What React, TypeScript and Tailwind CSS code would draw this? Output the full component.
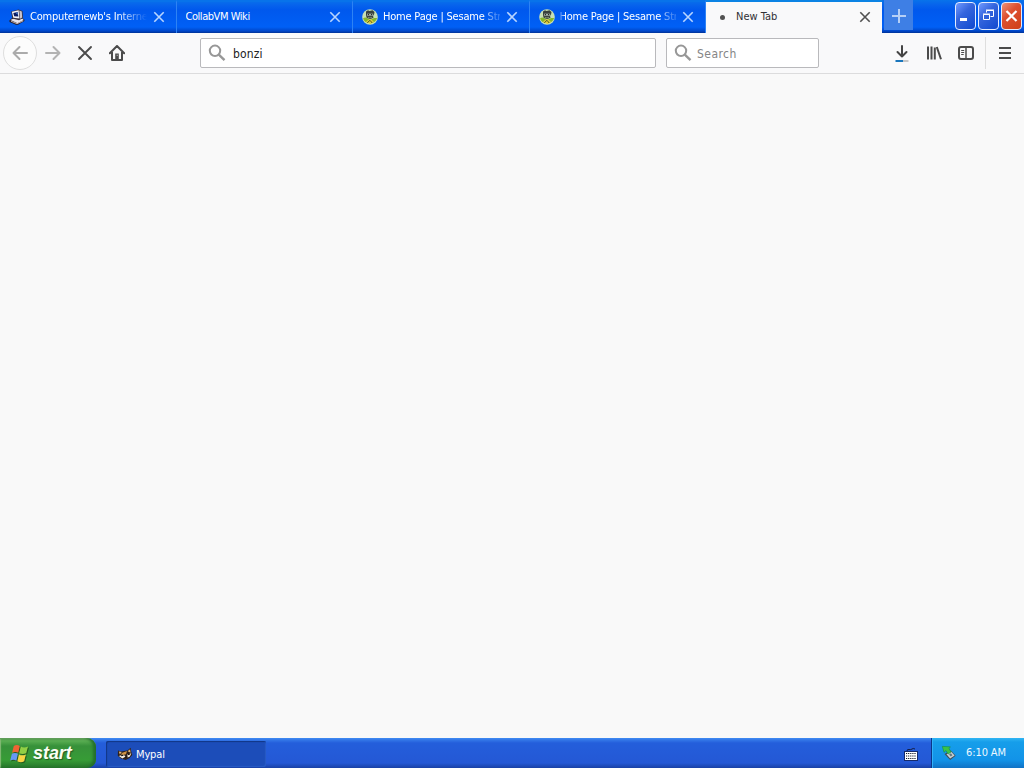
import type { ReactNode } from "react";
import clsx from "clsx";

type TabProps = {
  title: string;
  icon?: ReactNode;
  active?: boolean;
  fade?: string;
  titleClass?: string;
};

function CloseIcon({ className }: { className?: string }) {
  return (
    <svg viewBox="0 0 12 12" className={clsx("size-3 shrink-0", className)} fill="none" stroke="currentColor">
      <path d="M1.3 1.3l9.4 9.4M10.7 1.3l-9.4 9.4" strokeWidth="1.6" />
    </svg>
  );
}

function SearchIcon() {
  return (
    <svg viewBox="0 0 18 18" className="size-[18px] shrink-0" fill="none" stroke="#979797">
      <circle cx="7" cy="6.8" r="5.2" strokeWidth="2" />
      <path d="M10.8 10.6l5.7 5.6" strokeWidth="2.4" />
    </svg>
  );
}

function ComputerIcon() {
  return (
    <svg viewBox="0 0 16 16" className="size-4 shrink-0">
      <path d="M.5 11.3l3-2.6 9.5.3 2.4 1.6v1.4L9 15.8H7L.5 13z" fill="#251c26" />
      <path d="M1.5 11l3-1.6 8.8.1 1.4 1.5-6.2 3.2z" fill="#e6e3ec" />
      <path d="M2 12.2l6 2.5 6.2-2.8" stroke="#c9b9b8" strokeWidth=".9" fill="none" />
      <path d="M2.2 2.5L9.5.4l4 1.5.5 7-4 2.3-6.7-1.7z" fill="#39323f" />
      <path d="M2.9 2.7l6.7-1.5.9 8.4-6.2-.9z" fill="#f3f4fa" />
      <path d="M4.3 3.9l4.4-.9.6 4.6-4.1-.3z" fill="#0a1c62" />
      <path d="M6.6 3.8l1.8-.4.3 2.3z" fill="#4b8ee8" />
      <path d="M10.3 1.4l2.5 1 .4 6-2.1 1.4z" fill="#c9c3cb" />
    </svg>
  );
}

function SesameIcon() {
  return (
    <svg viewBox="0 0 16 16" className="size-4 shrink-0">
      <circle cx="8" cy="8" r="7.8" fill="#c7e0b4" />
      <path d="M1 9.5Q3 8 5 9l3 2 4-2 3.2 0a7.6 7.6 0 0 1-14.2.5z" fill="#86b52a" />
      <path d="M4 2.5l2-1.2 1.5.8 3-.8 2 1.6-.5 2.8-1 1 .5 2-3.4 1.5-3.5-1.4L4 6z" fill="#39413c" />
      <path d="M5 4.7h6.2v2H5z" fill="#a9b6ae" />
      <circle cx="6.4" cy="5.6" r=".7" fill="#151b16" />
      <circle cx="9.6" cy="5.6" r=".7" fill="#151b16" />
      <path d="M5.8 8.2q2.1 1.5 4.3 0" stroke="#7c9173" fill="none" />
      <path d="M4 12.5l3.5-2.2 2 .3 2.5 2.5-3.6 2z" fill="#e3cc3a" />
      <path d="M5.3 13.7l2.7-2.4 2.2 2.7" stroke="#4d5b22" fill="none" />
    </svg>
  );
}

function RaccoonIcon() {
  return (
    <svg viewBox="0 0 16 16" className="size-4 shrink-0">
      <path d="M1 4.6l3 1 3-.6 3.5-.4L13.6 1.8l.7 4 1 3.2-2.7 3-3.9 2L4 12.6.8 9.8z" fill="#30211a" />
      <path d="M1.8 5.6l3 .5-2 2.5zM10.6 5.2l2.5-2 .5 3.5z" fill="#dfb376" />
      <path d="M4.8 6.9L10 5l-1 3.2-5 1.3z" fill="#d09343" />
      <path d="M1.8 10l4.6-1.6 2.2 2.1-3.2 2zM10.3 8.5l4-1.3-1.4 3.4-2.2 1z" fill="#f5ebdc" />
      <path d="M4.2 9.7l2.2-.5M11 8.6l1.9-.6" stroke="#15100e" strokeWidth="1.2" />
      <path d="M8 10.5l1.7.2-1 1.4z" fill="#090909" />
    </svg>
  );
}

function WindowsFlag() {
  return (
    <svg viewBox="0 0 17 17" className="size-[19px] shrink-0 drop-shadow-[1px_1px_0_#245e20]">
      <path d="M3.4 1.8Q5.9.1 8.8 1.7L7.4 7.8Q4.7 6.3 1.9 7.8z" fill="#ef6434" />
      <path d="M9.7 2.3q2.9 1.5 6.4 0l-1.6 6q-3.3 1.4-6.3 0z" fill="#91cf45" />
      <path d="M1.7 8.7Q4.4 7.2 7.1 8.7l-1.4 6.2Q3 13.4.2 14.8z" fill="#6698f5" />
      <path d="M8 9.3q2.9 1.5 6.2 0l-1.5 6.2q-3 1.5-6.1 0z" fill="#f8d444" />
    </svg>
  );
}

function Tab({ title, icon, active = false, fade, titleClass }: TabProps) {
  return (
    <div
      className={clsx(
        "flex shrink-0 items-center border-t-2 pb-px pl-[9px]",
        active
          ? "w-[176px] border-[#0b83e4] bg-[#f9f9fa] text-[#303034]"
          : "w-[176.5px] border-r border-[#0873ea] border-r-[#2e83f4] text-white",
      )}
    >
      {icon && <span className="mr-[5px] flex size-4 shrink-0 items-center justify-center">{icon}</span>}
      <span
        className={clsx("min-w-0 flex-1 overflow-hidden whitespace-nowrap text-[11px] leading-4", fade, titleClass)}
      >
        {title}
      </span>
      <CloseIcon className={clsx("mr-[11px] ml-[6px]", active ? "text-[#505050]" : "text-[#b7d5ff]")} />
    </div>
  );
}

function WindowButton({ children, danger = false }: { children: ReactNode; danger?: boolean }) {
  return (
    <div
      className={clsx(
        "flex h-7 w-[21px] items-center justify-center rounded-[4px] border border-[#e4edff]",
        danger
          ? "bg-[linear-gradient(135deg,#ee9278,#dd5030_40%,#cf3f18)]"
          : "bg-[linear-gradient(135deg,#719aff,#3565dd_40%,#1049cf)]",
      )}
    >
      <svg viewBox="0 0 19 26" className="h-[26px] w-[19px]" fill="none" stroke="#fff">
        {children}
      </svg>
    </div>
  );
}

function TabStrip() {
  return (
    <header className="flex h-[33px] shrink-0 bg-[linear-gradient(180deg,#0873ea_0px,#0763ec_5px,#0058ed_10px,#0060f6_27px,#0046c9_31px,#003195_33px)]">
      <Tab
        title="Computernewb's Internet"
        icon={<ComputerIcon />}
        fade="[mask-image:linear-gradient(90deg,#000_75%,transparent)]"
        titleClass="tracking-[-0.2px]"
      />
      <Tab title="CollabVM Wiki" titleClass="tracking-[-0.45px]" />
      <Tab
        title="Home Page | Sesame Street"
        icon={<SesameIcon />}
        fade="[mask-image:linear-gradient(90deg,#000_87%,#0007_92%,#0003)]"
        titleClass="tracking-[-0.2px]"
      />
      <Tab
        title="Home Page | Sesame Street"
        icon={<SesameIcon />}
        fade="[mask-image:linear-gradient(90deg,#0004_0,#000_5%,#000_87%,#0007_92%,#0003)]"
        titleClass="tracking-[-0.2px]"
      />
      <Tab title="New Tab" active icon={<span className="mr-px size-[5px] rounded-full bg-[#525252]" />} />
      <div className="ml-[2px] flex h-[30px] w-[29px] items-center justify-center bg-[#3e7fe5]">
        <svg viewBox="0 0 14 14" className="mt-px size-[14px]" stroke="#b5cff6" strokeWidth="2">
          <path d="M7 0v14M0 7h14" />
        </svg>
      </div>
      <div className="ml-auto flex gap-[2px] pt-[2px] pr-[2px]">
        <WindowButton>
          <path d="M4 16.5h7" strokeWidth="3" />
        </WindowButton>
        <WindowButton>
          <path d="M7.5 9.5v-2h7v6h-3M7 7h8" />
          <path d="M4.5 11.5h6v5h-6zM4 11h7" />
        </WindowButton>
        <WindowButton danger>
          <path d="M4.5 8l10 10M14.5 8l-10 10" strokeWidth="2.2" />
        </WindowButton>
      </div>
    </header>
  );
}

function Toolbar() {
  return (
    <nav className="flex h-[41px] shrink-0 items-center border-b border-[#dcdcdd] bg-[#f9f9fa] pl-[3px]">
      <div className="flex size-[34px] items-center justify-center rounded-full border border-[#dedede] bg-[#fcfcfc]">
        <svg viewBox="0 0 16 16" className="size-4" fill="none" stroke="#ababab" strokeWidth="2" strokeLinecap="round" strokeLinejoin="round">
          <path d="M15 8H1.5M7.5 2l-6 6 6 6" />
        </svg>
      </div>
      <svg viewBox="0 0 16 16" className="ml-2 size-4" fill="none" stroke="#b3b3b3" strokeWidth="2" strokeLinecap="round" strokeLinejoin="round">
        <path d="M1 8h13.5M8.5 2l6 6-6 6" />
      </svg>
      <svg viewBox="0 0 16 16" className="ml-4 size-4" fill="none" stroke="#4b4b4b" strokeWidth="1.9" strokeLinecap="round">
        <path d="M2 2l12 12M14 2L2 14" />
      </svg>
      <svg viewBox="0 0 16 16" className="ml-4 size-4" fill="none" stroke="#4b4b4b" strokeWidth="2" strokeLinejoin="round">
        <path d="M.8 8.2L8 1l7.2 7.2M3 7v8h10V7" strokeLinecap="round" />
        <path d="M6.2 8.5h3.6V15H6.2z" fill="#4b4b4b" stroke="none" />
        <path d="M7.7 9.7h1v1h-1z" fill="#ddd" stroke="none" />
      </svg>
      <div className="ml-[75px] flex h-[30px] w-[456px] items-center rounded-[2px] border border-[#b9b9bc] bg-white pl-[7px]">
        <SearchIcon />
        <span className="mt-[2px] ml-[7px] text-[12px] tracking-[0.15px] text-[#222]">bonzi</span>
      </div>
      <div className="ml-[10px] flex h-[30px] w-[153px] items-center rounded-[2px] border border-[#b9b9bc] bg-white pl-[7px]">
        <SearchIcon />
        <span className="mt-[2px] ml-[5px] text-[12px] tracking-[0.45px] text-[#858585]">Search</span>
      </div>
      <svg viewBox="0 0 16 18" className="mt-px ml-[75px] h-[18px] w-4" fill="none" stroke="#444" strokeWidth="2" strokeLinecap="round" strokeLinejoin="round">
        <path d="M8 1v10.5M3.5 7L8 11.5 12.5 7" />
        <path d="M2 16h12.5" stroke="#c6c6c6" strokeLinecap="butt" />
        <path d="M1.5 16H9" stroke="#1976bc" strokeLinecap="butt" />
      </svg>
      <svg viewBox="0 0 16 16" className="ml-4 size-4" stroke="#4b4b4b" strokeWidth="2">
        <path d="M2 1.5v13M5.5 1.5v13M8.8 2.5v12M10.8 2L15 14.3" />
      </svg>
      <svg viewBox="0 0 16 16" className="ml-4 size-4" fill="none" stroke="#4b4b4b">
        <rect x="1" y="2" width="14" height="12" rx="2" strokeWidth="2" />
        <path d="M8 2v12" strokeWidth="1.5" />
        <path d="M3.2 5.5h3M3.2 7.5h3M3.2 9.5h2.5" />
      </svg>
      <div className="ml-[11px] h-8 w-px bg-[#dedede]" />
      <svg viewBox="0 0 14 14" className="ml-3 size-[14px]" stroke="#4b4b4b" strokeWidth="2">
        <path d="M1 2h12M1 7h12M1 12h12" />
      </svg>
    </nav>
  );
}

function Taskbar() {
  return (
    <footer className="flex h-[30px] shrink-0 bg-[linear-gradient(180deg,#3f8cf3_0px,#3376e7_2px,#245edb_5px,#2458d5_25px,#1941a5_30px)] text-[11px]">
      <div className="flex w-[96px] items-center rounded-r-[9px] bg-[linear-gradient(180deg,#64a35c_0px,#58ad51_3px,#37913a_8px,#379c36_22px,#25742a_30px)] pl-[10px] shadow-[inset_-3px_0_3px_#246f2b,inset_1px_1px_1px_#86ba76]">
        <WindowsFlag />
        <span className="ml-[4px] font-['Liberation_Sans'] text-[18px] leading-6 font-bold tracking-[-0.05px] text-[#fbfff4] italic [text-shadow:1px_1px_1px_#245a24]">
          start
        </span>
      </div>
      <div className="mt-[3px] ml-[10px] flex h-[26px] w-[160px] items-center rounded-[2px] bg-[#1c4db9] pl-[11px] text-white shadow-[inset_1px_1px_1px_#123786,inset_-1px_-1px_1px_#285bc5]">
        <RaccoonIcon />
        <span className="mt-[2px] ml-[3px] tracking-[-0.15px]">Mypal</span>
      </div>
      <div className="ml-auto flex w-[27px] items-center">
        <svg viewBox="0 0 14 14" className="mt-px h-[14px] w-[14px]">
          <path d="M3 4q0-2 2-1.5t3-.5q1-1 3 0" stroke="#141d45" fill="none" />
          <rect x=".5" y="4.5" width="13" height="9" fill="#fff" stroke="#172b6b" />
          <path d="M2 6.5h10M2 9h10M2 11.5h10" stroke="#101525" strokeDasharray="1.2 .9" />
        </svg>
      </div>
      <div className="flex w-[93px] items-center border-l border-[#0b3688] bg-[linear-gradient(180deg,#31b5f3_0px,#169eea_4px,#1293e8_22px,#1172c5_30px)] pl-[9px] text-[#edf8ff] shadow-[inset_1px_0_0_#31b2fa]">
        <svg viewBox="0 0 16 16" className="size-4">
          <path d="M3.5 9l6.3-3.5 4.8 5.2-5.4 4.2z" fill="#424d57" />
          <path d="M5.5 9.2l4.5-2.6 3.6 4-4.5 2.9z" fill="#c9d2d4" />
          <path d="M8 9.4l1.9-1.1 1.6 2-1.8 1.2z" fill="#617984" />
          <path d="M1.3 1.4l8 .4-1.2 1.9 2 3.4-3 2-2.2-3.5-1.9 1.8z" fill="#39c347" stroke="#13853a" strokeWidth=".5" />
        </svg>
        <span className="mt-px ml-[9px] tracking-[-0.1px]">6:10 AM</span>
      </div>
    </footer>
  );
}

export default function App() {
  return (
    <div className="flex h-screen w-full flex-col overflow-hidden bg-[#f9f9fa] font-['DejaVu_Sans_Condensed','DejaVu_Sans',sans-serif]">
      <TabStrip />
      <Toolbar />
      <main className="flex-1 bg-[#f9f9f9]" />
      <Taskbar />
    </div>
  );
}
